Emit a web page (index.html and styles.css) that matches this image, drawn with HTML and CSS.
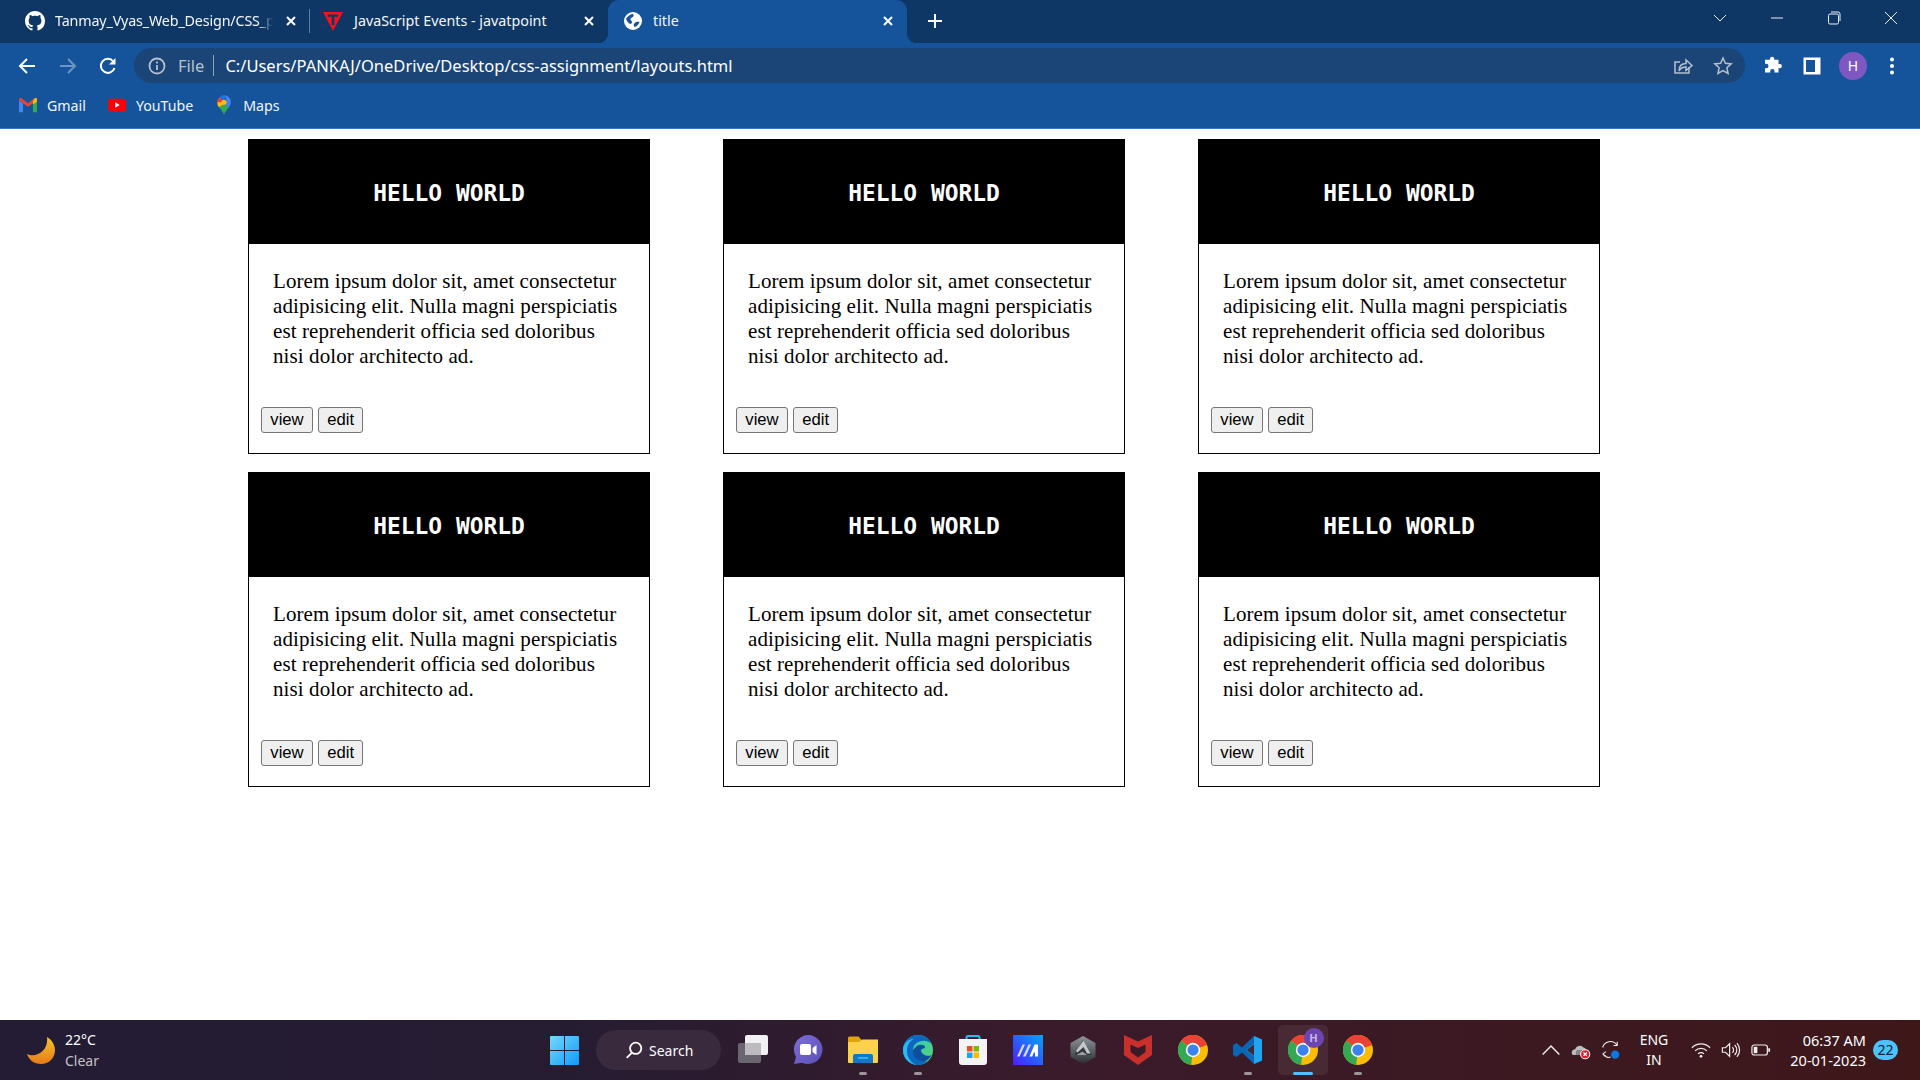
FILE: index.html
```html
<!DOCTYPE html>
<html lang="en">
<head>
<meta charset="utf-8">
<title>title</title>
<link rel="stylesheet" href="styles.css">
</head>
<body>
<svg class="defs" width="0" height="0" aria-hidden="true">
  <defs>
    <symbol id="chrome" viewBox="0 0 48 48">
      <circle cx="24" cy="24" r="24" fill="#fbbc04"/>
      <path d="M24 24L5.2 9A24 24 0 0 1 46.6 16Z" fill="#ea4335"/>
      <path d="M24 24L5.2 9A24 24 0 0 0 21 47.8Z" fill="#34a853"/>
      <circle cx="24" cy="24" r="11.5" fill="#fff"/>
      <circle cx="24" cy="24" r="9" fill="#3b82ee"/>
    </symbol>
  </defs>
</svg>

<header class="browser">
  <div class="tabstrip">
    <div class="tab tab-first">
      <svg class="favicon" viewBox="0 0 16 16"><path fill="#fff" d="M8 0C3.58 0 0 3.58 0 8c0 3.54 2.29 6.53 5.47 7.59.4.07.55-.17.55-.38 0-.19-.01-.82-.01-1.49-2.01.37-2.53-.49-2.69-.94-.09-.23-.48-.94-.82-1.13-.28-.15-.68-.52-.01-.53.63-.01 1.08.58 1.23.82.72 1.21 1.87.87 2.33.66.07-.52.28-.87.51-1.07-1.78-.2-3.64-.89-3.64-3.95 0-.87.31-1.59.82-2.15-.08-.2-.36-1.02.08-2.12 0 0 .67-.21 2.2.82.64-.18 1.32-.27 2-.27.68 0 1.36.09 2 .27 1.53-1.04 2.2-.82 2.2-.82.44 1.1.16 1.92.08 2.12.51.56.82 1.27.82 2.15 0 3.07-1.87 3.75-3.65 3.95.29.25.54.73.54 1.48 0 1.07-.01 1.93-.01 2.2 0 .21.15.46.55.38A8.013 8.013 0 0016 8c0-4.42-3.58-8-8-8z"/></svg>
      <span class="tab-title tab-fade">Tanmay_Vyas_Web_Design/CSS_p</span>
      <svg class="tab-close" viewBox="0 0 12 12"><path d="M2 2l8 8M10 2l-8 8"/></svg>
    </div>
    <div class="tab tab-second">
      <svg class="favicon" viewBox="0 0 20 20"><path fill="#f0131e" d="M0 1h20L10 20z"/><path fill="#0e3766" d="M4.800 3.400h10.400v2.400h-3.900V14H8.700V5.800H4.800z"/></svg>
      <span class="tab-title">JavaScript Events - javatpoint</span>
      <svg class="tab-close" viewBox="0 0 12 12"><path d="M2 2l8 8M10 2l-8 8"/></svg>
    </div>
    <div class="tab tab-active">
      <svg class="favicon" viewBox="0 0 20 20"><circle cx="10" cy="10" r="9" fill="#fff"/><path fill="#15549a" d="M3 7.500c1.500-1.800 3-3.600 6.500-4.800 1.400.8 1.500 2 .6 3.100-1 .9-2.400.8-2.600 2.200-.1 1.300 1.200 1.500 1.500 2.800.2 1.200-.7 2-1.700 2.100C5.300 12.600 3.700 10 3 7.500zM11.500 12.300c1-1.300 3-1.700 5-1.500-.6 2.600-2.300 4.500-4.800 5.300-1.200-1-1.300-2.600-.2-3.800z"/></svg>
      <span class="tab-title">title</span>
      <svg class="tab-close" viewBox="0 0 12 12"><path d="M2 2l8 8M10 2l-8 8"/></svg>
    </div>
    <svg class="new-tab" viewBox="0 0 18 18"><path d="M9 2v14M2 9h14"/></svg>
    <div class="window-controls">
      <span class="win-btn"><svg viewBox="0 0 14 14"><path d="M1 4l6 6 6-6"/></svg></span>
      <span class="win-btn"><svg viewBox="0 0 14 14"><path d="M1 7h12"/></svg></span>
      <span class="win-btn"><svg viewBox="0 0 14 14"><rect x="1.500" y="3" width="10" height="10" rx="1.500"/><path d="M4 1h7a2 2 0 0 1 2 2v7"/></svg></span>
      <span class="win-btn win-close"><svg viewBox="0 0 14 14"><path d="M1 1l12 12M13 1L1 13"/></svg></span>
    </div>
  </div>

  <div class="toolbar">
    <span class="nav-btn"><svg viewBox="0 0 20 20"><path d="M18 10H3M10 3l-7 7 7 7"/></svg></span>
    <span class="nav-btn nav-off"><svg viewBox="0 0 20 20"><path d="M2 10h15M10 3l7 7-7 7"/></svg></span>
    <span class="nav-btn"><svg viewBox="0 0 20 20"><path d="M16.500 12a7 7 0 1 1-1.200-6.500"/><path class="solid" d="M17.500 2v6.500H11z"/></svg></span>
    <div class="omnibox">
      <svg class="info" viewBox="0 0 20 20"><circle cx="10" cy="10" r="7.500"/><path d="M10 9v5M10 5.500v2"/></svg>
      <span class="scheme">File</span>
      <span class="omni-sep"></span>
      <span class="url">C:/Users/PANKAJ/OneDrive/Desktop/css-assignment/layouts.html</span>
      <span class="omni-actions">
        <span class="omni-btn"><svg viewBox="0 0 20 20"><path d="M16 11v6H2V6h5"/><path d="M6 15c0-5 3-7.500 7-7.500V4l6 5.500-6 5V11c-3 0-5.500 1-7 4z"/></svg></span>
        <span class="omni-btn"><svg viewBox="0 0 20 20"><path d="M10 2l2.400 5.300 5.800.6-4.300 3.900 1.200 5.700L10 14.600l-5.100 2.900 1.200-5.700-4.300-3.900 5.800-.6z"/></svg></span>
      </span>
    </div>
    <span class="tool-btn"><svg viewBox="0 0 20 20"><path class="solid" d="M8 2.500a2.200 2.200 0 0 1 4.300 0c0 .5-.1.900-.2 1.300h4.400v4.300c.4-.2.800-.2 1.200-.2a2.200 2.200 0 0 1 0 4.400c-.4 0-.8-.1-1.200-.2v4.400h-4.100c.1-.4.200-.8.200-1.200a2.200 2.200 0 0 0-4.400 0c0 .4.100.8.200 1.200H3v-4.600c.4.200.8.300 1.300.3a2.200 2.200 0 0 0 0-4.400c-.5 0-.9.100-1.300.3V3.800h5.200c-.1-.4-.2-.8-.2-1.300z"/></svg></span>
    <span class="tool-btn"><svg viewBox="0 0 20 20"><path class="solid" fill-rule="evenodd" d="M1.500 1.500h17v17h-17zM4 4v12h9V4z"/></svg></span>
    <span class="tool-btn tool-avatar"><span class="avatar">H</span></span>
    <span class="tool-btn"><svg viewBox="0 0 20 20"><circle class="solid" cx="10" cy="3.500" r="2"/><circle class="solid" cx="10" cy="10" r="2"/><circle class="solid" cx="10" cy="16.500" r="2"/></svg></span>
  </div>

  <nav class="bookmarks">
    <a class="bookmark">
      <svg viewBox="0 0 20 16"><path fill="#ea4335" d="M0 3l10 7 10-7V1l-2-1-8 6-8-6-2 1z"/><path fill="#4285f4" d="M0 3v13h4.500V6.500z"/><path fill="#34a853" d="M20 3v13h-4.500V6.500z"/><path fill="#fbbc04" d="M15.500 3.500L18 0l2 1v3l-4.500 3.500z"/></svg>
      <span>Gmail</span>
    </a>
    <a class="bookmark">
      <svg viewBox="0 0 20 14"><rect width="20" height="14" rx="3.500" fill="#f00"/><path fill="#fff" d="M8 4l5 3-5 3z"/></svg>
      <span>YouTube</span>
    </a>
    <a class="bookmark">
      <svg viewBox="0 0 16 22"><path fill="#34a853" d="M8 22c-1-3.500-3.500-6-5.500-8.500L8 10l5.500 3.500C11.500 16 9 18.500 8 22z"/><path fill="#fbbc04" d="M2.500 13.500A7.800 7.800 0 0 1 .5 8L5 7l3 3z"/><path fill="#4285f4" d="M8 0a8 8 0 0 1 7.500 8c0 2-1 3.800-2 5.500L8 10l3-4z"/><path fill="#ea4335" d="M.5 8A8 8 0 0 1 3 2.500L7 6 5 8z"/><path fill="#1a73e8" d="M3 2.500A8 8 0 0 1 8 0l3 3-4 3z"/><circle cx="8" cy="8" r="2.800" fill="#fbbc04"/></svg>
      <span>Maps</span>
    </a>
  </nav>
</header>

<main class="page">
  <section class="grid">
    <article class="card">
      <h2 class="card-head">HELLO WORLD</h2>
      <p class="card-text">Lorem ipsum dolor sit, amet consectetur adipisicing elit. Nulla magni perspiciatis est reprehenderit officia sed doloribus nisi dolor architecto ad.</p>
      <div class="card-actions"><button class="btn">view</button><button class="btn">edit</button></div>
    </article>
    <article class="card">
      <h2 class="card-head">HELLO WORLD</h2>
      <p class="card-text">Lorem ipsum dolor sit, amet consectetur adipisicing elit. Nulla magni perspiciatis est reprehenderit officia sed doloribus nisi dolor architecto ad.</p>
      <div class="card-actions"><button class="btn">view</button><button class="btn">edit</button></div>
    </article>
    <article class="card">
      <h2 class="card-head">HELLO WORLD</h2>
      <p class="card-text">Lorem ipsum dolor sit, amet consectetur adipisicing elit. Nulla magni perspiciatis est reprehenderit officia sed doloribus nisi dolor architecto ad.</p>
      <div class="card-actions"><button class="btn">view</button><button class="btn">edit</button></div>
    </article>
    <article class="card">
      <h2 class="card-head">HELLO WORLD</h2>
      <p class="card-text">Lorem ipsum dolor sit, amet consectetur adipisicing elit. Nulla magni perspiciatis est reprehenderit officia sed doloribus nisi dolor architecto ad.</p>
      <div class="card-actions"><button class="btn">view</button><button class="btn">edit</button></div>
    </article>
    <article class="card">
      <h2 class="card-head">HELLO WORLD</h2>
      <p class="card-text">Lorem ipsum dolor sit, amet consectetur adipisicing elit. Nulla magni perspiciatis est reprehenderit officia sed doloribus nisi dolor architecto ad.</p>
      <div class="card-actions"><button class="btn">view</button><button class="btn">edit</button></div>
    </article>
    <article class="card">
      <h2 class="card-head">HELLO WORLD</h2>
      <p class="card-text">Lorem ipsum dolor sit, amet consectetur adipisicing elit. Nulla magni perspiciatis est reprehenderit officia sed doloribus nisi dolor architecto ad.</p>
      <div class="card-actions"><button class="btn">view</button><button class="btn">edit</button></div>
    </article>
  </section>
</main>

<footer class="taskbar">
  <div class="weather">
    <svg class="moon" viewBox="0 0 28 27"><defs><linearGradient id="moonGrad" x1="0" y1="0" x2="0" y2="1"><stop offset="0" stop-color="#f3c62a"/><stop offset="1" stop-color="#e8791a"/></linearGradient></defs><path fill="url(#moonGrad)" d="M20 0C25 3 28 8 28 13c0 8-6 14-14 14C7 27 2 23 0 17c3 1.500 7 2 11 0 7-3 10-10 9-17z"/></svg>
    <div class="weather-text"><span class="temp">22°C</span><span class="cond">Clear</span></div>
  </div>

  <div class="dock">
    <svg class="start" viewBox="0 0 29 29"><defs><linearGradient id="winGrad" x1="0" y1="0" x2="1" y2="1"><stop offset="0" stop-color="#76d8fb"/><stop offset="1" stop-color="#0f9bfa"/></linearGradient></defs><path fill="url(#winGrad)" d="M1 0h13v14H0V1a1 1 0 0 1 1-1zM15 0h13a1 1 0 0 1 1 1v13H15zM0 15h14v14H1a1 1 0 0 1-1-1zM15 15h14v13a1 1 0 0 1-1 1H15z"/></svg>
    <div class="search">
      <svg viewBox="0 0 16 16"><circle cx="9.500" cy="6.500" r="5"/><path d="M6 10.500L1.500 15"/></svg>
      <span>Search</span>
    </div>
    <span class="app"><svg viewBox="0 0 30 30"><rect x="0" y="8" width="23" height="20" rx="2" fill="#6a6670"/><rect x="7" y="0" width="23" height="20" rx="2" fill="#f1f0f2"/><rect x="7" y="8" width="16" height="12" fill="#bdbbc0"/></svg></span>
    <span class="app"><svg viewBox="0 0 30 30"><defs><linearGradient id="teamsGrad" x1="0" y1="0" x2="1" y2="1"><stop offset="0" stop-color="#7c6fd6"/><stop offset="1" stop-color="#5a4fb8"/></linearGradient></defs><path fill="url(#teamsGrad)" d="M15 0a14.500 14.500 0 1 1-6 27.700L1 29l2-7A14.500 14.500 0 0 1 15 0z"/><rect x="7" y="9" width="11" height="11" rx="2" fill="#fff"/><path fill="#fff" d="M19.500 13l4-3v10l-4-3z"/></svg></span>
    <span class="app has-pip"><svg viewBox="0 0 30 28"><path fill="#e0a50e" d="M0 2a1.500 1.500 0 0 1 1.500-1.500h9l3.500 4h16V26H0z"/><path fill="#fdd14c" d="M0 6h11l3-2.500h16V26a1 1 0 0 1-1 1H1a1 1 0 0 1-1-1z"/><path fill="#0f78c9" d="M5 27v-7a2 2 0 0 1 2-2h16a2 2 0 0 1 2 2v7z"/><rect x="10" y="21" width="10" height="1.800" fill="#3fb1f0"/></svg><i class="pip"></i></span>
    <span class="app has-pip"><svg viewBox="0 0 30 30"><defs><linearGradient id="edgeA" x1="0" y1="0" x2="1" y2="1"><stop offset="0" stop-color="#2fc4d8"/><stop offset="1" stop-color="#57d66a"/></linearGradient></defs><circle cx="15" cy="15" r="15" fill="url(#edgeA)"/><path fill="#0b67c0" d="M0 15C0 6 7 0 15 0c6 0 11 3 13.500 9-3-3-8-4-12-2.500C12 8 9 12 10.500 17c1.500 6 8 9 14 9.500C21 29 18 30 15 30 6 30 0 23 0 15z"/><path fill="#0d4f9c" d="M12 13c2-3 6-4 9-2.500 1.600.8 1.500 2.600-.5 3-3 .5-3 3-1 5 2.500 2.500 6 3 9 1.500-1.500 3-3.500 5-6 6-6 1-13-3-12.500-10 .1-1.300.7-2.300 2-3z"/><path fill="#2fb8ee" d="M0 15c0-6 5-11 11-11.500C7 6 3.500 10 4 17c.5 6 4 10.500 9 12.800C6 29 0 23 0 15z"/></svg><i class="pip"></i></span>
    <span class="app"><svg viewBox="0 0 30 30"><path d="M8.500 7V2.500a1.500 1.500 0 0 1 1.500-1.500h10a1.500 1.500 0 0 1 1.500 1.500V7" fill="none" stroke="#28bcee" stroke-width="2"/><path fill="#f4f3f4" d="M1 4h28v23a3 3 0 0 1-3 3H4a3 3 0 0 1-3-3z"/><rect x="9" y="11" width="5.500" height="5.500" fill="#ea4f24"/><rect x="15.500" y="11" width="5.500" height="5.500" fill="#7fb800"/><rect x="9" y="17.500" width="5.500" height="5.500" fill="#1ba4ef"/><rect x="15.500" y="17.500" width="5.500" height="5.500" fill="#ffb900"/></svg></span>
    <span class="app"><svg viewBox="0 0 30 30"><defs><linearGradient id="maGrad" x1="0" y1="1" x2="1" y2="0"><stop offset="0" stop-color="#4d1dff"/><stop offset="1" stop-color="#05a5f7"/></linearGradient></defs><rect width="30" height="30" fill="url(#maGrad)"/><path fill="#dcd8f8" d="M4 21.500l5.500-12H12l-5.500 12zM10 21.500l5.500-12H18l-5.500 12z"/><path fill="#fff" d="M16.500 21.500l5-12H25v12h-3v-4h-1.200l-1.600 4z"/></svg></span>
    <span class="app"><svg viewBox="0 0 30 30"><defs><linearGradient id="hexGrad" x1="0" y1="0" x2="0" y2="1"><stop offset="0" stop-color="#8f969b"/><stop offset="1" stop-color="#2a2e32"/></linearGradient></defs><path fill="url(#hexGrad)" d="M15 1l12.500 7v14L15 29 2.500 22V8z"/><path fill="#33383c" d="M15 5l8.500 15H6.500z"/><path fill="#c4c8cb" d="M15.500 5.500l7 13H19l-3.500-6.500-6 5.500L8 16z"/><path fill="#9ca2a6" d="M8.500 20l6-3.500 4.500 3.500z"/></svg></span>
    <span class="app"><svg viewBox="0 0 28 30"><path fill="#c9302c" fill-rule="evenodd" d="M0 0l14 6.500L28 0v20l-14 10L0 20zM6.500 9.500V17l7.500 5.500 7.500-5.500V9.500L14 13z"/></svg></span>
    <span class="app"><svg class="chrome"><use href="#chrome"/></svg></span>
    <span class="app has-pip"><svg viewBox="0 0 30 30"><path fill="#0a66b5" d="M21 1l8 3.500v21L21 29 9 17.500 3.500 22 0 20v-10l3.500-2L9 12.500z"/><path fill="#1fa6ef" d="M21 1l8 3.500v21L21 29z"/><path fill="#1a7fd0" d="M21 8.500v13L12.500 15z"/><path fill="#3a2a3a" d="M21 9.500v11L13.800 15z"/><path fill="#0a66b5" d="M3.500 12L8 15l-4.500 3.500z" /></svg><i class="pip"></i></span>
    <span class="app app-active"><svg class="chrome"><use href="#chrome"/></svg><span class="app-badge">H</span><i class="pip pip-active"></i></span>
    <span class="app has-pip"><svg class="chrome"><use href="#chrome"/></svg><i class="pip"></i></span>
  </div>

  <div class="tray">
    <span class="tray-icon"><svg viewBox="0 0 18 12"><path d="M1.500 10L9 2.500 16.500 10"/></svg></span>
    <span class="tray-icon"><svg viewBox="0 0 24 22"><path class="cloud" d="M2 17c-2.500-3-.5-7 3-7 1-4 7-6 10-2 1 .5 3 1 3 3H9c-2 0-3.500 3-3 6z"/><path class="cloud-dim" d="M6 17h7l-1-6H9c-2 0-3.500 3-3 6z"/><circle cx="17" cy="16" r="5.500" fill="#d81f2f"/><path class="cross" d="M15 14l4 4M19 14l-4 4"/></svg></span>
    <span class="tray-icon tray-sync"><svg viewBox="0 0 24 24"><path d="M2 9a9.500 9.500 0 0 1 17-3"/><path d="M19.500 2v4.500H15"/><path d="M2 17l4-3M2 17l4 2.500M2.500 17c2 3 6 4.500 9 3.500"/><circle class="blue" cx="17" cy="17.500" r="5"/></svg></span>
    <div class="lang"><span>ENG</span><span>IN</span></div>
    <span class="tray-icon"><svg viewBox="0 0 22 18"><path d="M1 6.500a14 14 0 0 1 20 0M4.500 10a9 9 0 0 1 13 0M7.800 13.200a4.500 4.500 0 0 1 6.400 0"/><circle class="dot" cx="11" cy="16" r="1.500"/></svg></span>
    <span class="tray-icon"><svg viewBox="0 0 22 18"><path d="M1.500 6.500h3.500L9.500 2v14L5 11.500H1.500zM12.500 6a4 4 0 0 1 0 6M15 3.500a7.500 7.500 0 0 1 0 11M17.500 1.500a11 11 0 0 1 0 15"/></svg></span>
    <span class="tray-icon"><svg viewBox="0 0 22 14"><rect x="1" y="1.500" width="17" height="11" rx="2.500"/><rect class="dot" x="3" y="3.500" width="4" height="7"/><path class="dot" d="M19 5h1.500a.5.500 0 0 1 .5.500v3a.5.500 0 0 1-.5.500H19z"/></svg></span>
    <div class="clock"><span>06:37 AM</span><span>20-01-2023</span></div>
    <span class="notif">22</span>
  </div>
</footer>
</body>
</html>
```
FILE: styles.css
```css
* { box-sizing: border-box; }
html, body { height: 100%; }
body {
  margin: 0;
  display: flex;
  flex-direction: column;
  height: 100vh;
  overflow: hidden;
  background: #fff;
  font-family: "Liberation Serif", serif;
}
.defs { position: absolute; }

/* browser chrome */
.browser {
  flex: none;
  background: #15549a;
  color: #fff;
  font-family: "Noto Sans", "Open Sans", sans-serif;
  border-bottom: 1px solid #3b78bd;
}
.tabstrip {
  display: flex;
  align-items: stretch;
  height: 43px;
  background: #0e3766;
}
.tab {
  display: flex;
  align-items: center;
  height: 43px;
  padding-bottom: 2px;
  font-size: 14.300px;
  position: relative;
}
.tab-first { width: 298px; margin-left: 12px; padding-left: 13px; padding-right: 13px; }
.tab-second { width: 298px; padding-left: 13px; padding-right: 13px; }
.tab-second .tab-title { margin-left: 11px; }
.tab-first::after {
  content: "";
  position: absolute;
  right: 0;
  top: 9px;
  height: 24px;
  width: 1px;
  background: #5f7d9f;
}
.tab-active {
  width: 299px;
  padding-left: 15px;
  padding-right: 13px;
  background: #15549a;
  border-radius: 11px 11px 0 0;
}
.tab-active::before, .tab-active::after {
  content: "";
  position: absolute;
  bottom: 0;
  width: 10px;
  height: 10px;
}
.tab-active::before { left: -10px; background: radial-gradient(circle at 0 0, transparent 10px, #15549a 10.500px); }
.tab-active::after { right: -10px; background: radial-gradient(circle at 100% 0, transparent 10px, #15549a 10.500px); }
.favicon { width: 20px; height: 20px; flex: none; }
.tab-title {
  flex: 1;
  margin-left: 10px;
  white-space: nowrap;
  color: #f2f6fb;
}
.tab-fade {
  -webkit-mask-image: linear-gradient(90deg, #000 93%, transparent);
  mask-image: linear-gradient(90deg, #000 93%, transparent);
  margin-right: 12px;
  min-width: 0;
  letter-spacing: -.15px;
}
.tab-close { width: 12px; height: 12px; flex: none; fill: none; stroke: #fff; stroke-width: 2; }
.new-tab { width: 18px; height: 18px; align-self: center; margin: -2px 0 0 19px; fill: none; stroke: #fff; stroke-width: 2; }
.window-controls { margin-left: auto; display: flex; align-items: flex-start; }
.win-btn { width: 57px; height: 36px; display: flex; align-items: center; justify-content: center; }
.win-close { width: 58px; }
.win-btn svg { width: 14px; height: 14px; fill: none; stroke: #e9eef5; stroke-width: 1; }

.toolbar {
  display: flex;
  align-items: center;
  height: 45px;
  padding: 0 8px 0 7px;
}
.nav-btn { width: 40px; height: 35px; display: flex; align-items: center; justify-content: center; flex: none; }
.nav-off { margin-left: 1px; }
.nav-btn svg { width: 20px; height: 20px; fill: none; stroke: #fff; stroke-width: 2; }
.nav-off svg { stroke: #6e95c1; }
.solid { fill: #fff; stroke: none; }
.omnibox {
  flex: 1;
  height: 35px;
  margin: 0 7px 0 6px;
  padding: 0 2px 0 13px;
  background: #1b4577;
  border-radius: 18px;
  display: flex;
  align-items: center;
  font-size: 16.500px;
}
.info { width: 20px; height: 20px; fill: none; stroke: #b4c0cd; stroke-width: 1.800; flex: none; }
.scheme { margin-left: 11px; color: #b4c0cd; }
.omni-sep { width: 1px; height: 21px; margin: 0 11px 0 9px; background: #8ea3ba; }
.url { color: #fff; white-space: nowrap; }
.omni-actions { margin-left: auto; display: flex; }
.omni-btn { width: 40px; height: 35px; display: flex; align-items: center; justify-content: center; }
.omni-btn svg { width: 20px; height: 20px; fill: none; stroke: #b4c0cd; stroke-width: 1.500; }
.tool-btn { width: 40px; height: 35px; display: flex; align-items: center; justify-content: center; flex: none; }
.tool-avatar { margin-left: 1px; margin-right: -1px; }
.tool-btn svg { width: 20px; height: 20px; }
.avatar {
  width: 28px;
  height: 28px;
  border-radius: 50%;
  background: #7e57c2;
  font-size: 14px;
  line-height: 28px;
  text-align: center;
}

.bookmarks {
  display: flex;
  align-items: center;
  gap: 22px;
  height: 40px;
  padding: 0 0 6px 19px;
  font-size: 14.200px;
}
.bookmark { display: flex; align-items: center; gap: 10px; color: #f2f6fb; }
.bookmark svg { width: 18px; height: 20px; flex: none; }

/* page */
.page { flex: 1; padding: 10px 0 0 248px; }
.grid {
  display: grid;
  grid-template-columns: repeat(3, 402px);
  column-gap: 73px;
  row-gap: 18px;
}
.card { height: 315px; border: 1px solid #000; display: flex; flex-direction: column; }
.card-head {
  margin: -1px -1px 0;
  height: 105px;
  background: #000;
  color: #fff;
  font: bold 22.900px/108px "DejaVu Sans Mono", "Liberation Mono", monospace;
  text-align: center;
}
.card-text {
  margin: 25px 0 38px;
  padding: 0 27px 0 24px;
  font-size: 21px;
  letter-spacing: .1px;
  line-height: 25px;
  color: #000;
}
.card-actions { display: flex; gap: 5px; padding-left: 12px; }
.btn {
  height: 26px;
  padding: 0 8.300px;
  border: 1px solid #767676;
  border-radius: 3px;
  background: #efefef;
  color: #000;
  font: 16.670px/1 "Liberation Sans", sans-serif;
}

/* taskbar */
.taskbar {
  flex: none;
  height: 60px;
  display: grid;
  grid-template-columns: 550px auto 1fr;
  align-items: center;
  background: linear-gradient(90deg, #231c34 0%, #261c32 30%, #3a1b2b 55%, #3e1719 100%);
  color: #fff;
  font-family: "Noto Sans", "Open Sans", sans-serif;
}
.weather { display: flex; align-items: center; padding-left: 27px; gap: 10px; }
.moon { width: 28px; height: 27px; flex: none; }
.weather-text { display: flex; flex-direction: column; font-size: 14px; line-height: 21px; }
.cond { color: #c4c2c9; }

.dock { display: flex; align-items: center; }
.start { width: 29px; height: 29px; flex: none; }
.search {
  width: 125px;
  height: 40px;
  margin: 0 4px 0 17px;
  border-radius: 20px;
  background: #3a2a3e;
  display: flex;
  align-items: center;
  padding-left: 29px;
  gap: 6px;
  font-size: 14px;
}
.search svg { width: 18px; height: 18px; fill: none; stroke: #fff; stroke-width: 1.600; flex: none; }
.app {
  position: relative;
  width: 55px;
  height: 50px;
  border-radius: 5px;
  display: flex;
  align-items: center;
  justify-content: center;
}
.app > svg { width: 30px; height: 30px; }
.app-active { background: rgba(255, 255, 255, .07); width: 50px; margin: 0 2.500px; }
.pip {
  position: absolute;
  left: 50%;
  bottom: 0;
  width: 8px;
  height: 3px;
  margin-left: -4px;
  border-radius: 2px;
  background: #9c9498;
}
.pip-active { width: 20px; margin-left: -10px; background: #4cc2ff; }
.app-badge {
  position: absolute;
  top: 3px;
  right: 4px;
  width: 20px;
  height: 20px;
  border-radius: 50%;
  background: #6b46b0;
  color: #c9b6e8;
  font-size: 11px;
  font-weight: 700;
  line-height: 20px;
  text-align: center;
}

.tray { display: flex; align-items: center; justify-content: flex-end; padding-right: 22px; }
.tray-icon { width: 30px; height: 30px; display: flex; align-items: center; justify-content: center; flex: none; }
.tray-icon svg { width: 20px; height: 20px; fill: none; stroke: #f1eeee; stroke-width: 1.300; }
.tray-sync { margin-right: 3px; }
.tray-icon .cloud { fill: #bcbcbc; stroke: none; }
.tray-icon .cloud-dim { fill: #8a8486; stroke: none; }
.tray-icon .cross { stroke: #fff; stroke-width: 1.500; }
.tray-icon .blue { fill: #0a78e6; stroke: none; }
.tray-icon .dot { fill: #f1eeee; stroke: none; }
.lang {
  width: 50px;
  margin-right: 7px;
  display: flex;
  flex-direction: column;
  align-items: center;
  font-size: 14px;
  line-height: 20px;
}
.clock {
  width: 90px;
  display: flex;
  flex-direction: column;
  align-items: flex-end;
  font-size: 14.500px;
  line-height: 20px;
  white-space: nowrap;
}
.notif {
  width: 25px;
  height: 20px;
  margin-left: 7px;
  border-radius: 10px;
  background: #4cc2ff;
  color: #102030;
  font-size: 14px;
  line-height: 20px;
  text-align: center;
}
```
